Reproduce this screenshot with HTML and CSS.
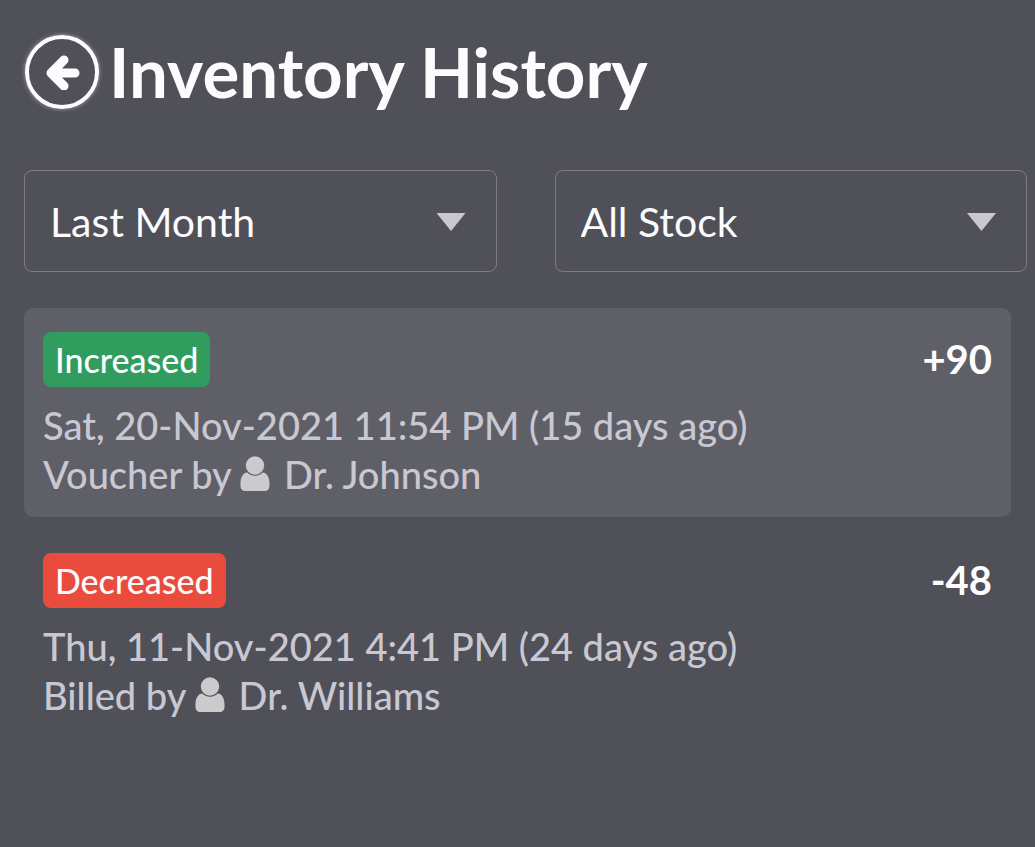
FILE: index.html
```html
<!DOCTYPE html>
<html lang="en">
<head>
  <meta charset="UTF-8">
  <meta name="viewport" content="width=device-width, initial-scale=1">
  <title>Inventory History</title>
  <link rel="stylesheet" href="styles.css">
</head>
<body>
  <svg class="sprite" aria-hidden="true">
    <symbol id="icon-user" viewBox="0 0 30 36">
      <path d="M7 16.500C3 17 .5 21.500 .5 27.500V30c0 3 2 5 5 5h19c3 0 5-2 5-5v-2.500c0-6-2.500-10.500-6.500-11-2 2-5 3.200-8 3.200s-6-1.200-8-3.200z"/>
      <circle cx="15" cy="9.500" r="9.200"/>
    </symbol>
  </svg>

  <header class="page-header">
    <button class="back-button" type="button" aria-label="Back">
      <svg class="back-icon" viewBox="0 0 36 36">
        <path d="M20 6 7 19l13 13M8 19h23"/>
      </svg>
    </button>
    <h1>Inventory History</h1>
  </header>

  <main>
    <form class="filters">
      <div class="dropdown">
        <select id="period" aria-label="Period">
          <option>Last Month</option>
        </select>
      </div>
      <div class="dropdown">
        <select id="stock" aria-label="Stock">
          <option>All Stock</option>
        </select>
      </div>
    </form>

    <ul class="history">
      <li class="entry highlighted">
        <div class="entry-top">
          <span class="label increased">Increased</span>
          <strong class="amount">+90</strong>
        </div>
        <div class="entry-line">Sat, 20-Nov-2021 11:54 PM (15 days ago)</div>
        <div class="entry-line">Voucher by <svg class="user-icon" aria-hidden="true"><use href="#icon-user"/></svg> Dr. Johnson</div>
      </li>
      <li class="entry">
        <div class="entry-top">
          <span class="label decreased">Decreased</span>
          <strong class="amount">-48</strong>
        </div>
        <div class="entry-line">Thu, 11-Nov-2021 4:41 PM (24 days ago)</div>
        <div class="entry-line">Billed by <svg class="user-icon" aria-hidden="true"><use href="#icon-user"/></svg> Dr. Williams</div>
      </li>
    </ul>
  </main>
</body>
</html>
```
FILE: styles.css
```css
* { box-sizing: border-box; }
body {
  margin: 0;
  background: #505058;
  color: #fcfcff;
  font-family: Lato, sans-serif;
  font-size: 38px;
  font-weight: 500;
}
.sprite {
  display: none;
}
.page-header {
  display: flex;
  align-items: center;
  gap: 10px;
  padding: 24px 25px 50px;
}
.page-header h1 {
  margin: 0;
  font-size: 69px;
  line-height: 96px;
  font-weight: bold;
}
.back-button {
  display: flex;
  align-items: center;
  justify-content: center;
  flex: none;
  width: 74px;
  height: 74px;
  padding: 0;
  border: 4px solid #fcfcff;
  border-radius: 50%;
  background: none;
  box-shadow: 0 0 4px rgba(255,255,255,0.5);
  cursor: pointer;
}
.back-icon {
  width: 36px;
  height: 36px;
  fill: none;
  stroke: #fcfcff;
  stroke-width: 9;
  stroke-linecap: round;
  stroke-linejoin: round;
}
.filters {
  display: grid;
  grid-template-columns: 1fr 1fr;
  gap: 58px;
  padding: 0 8px 0 24px;
}
.dropdown {
  position: relative;
}
.dropdown::after {
  content: "";
  position: absolute;
  top: 43px;
  right: 31px;
  width: 29px;
  height: 18px;
  background: #c9c8ce;
  clip-path: polygon(0 0, 100% 0, 50% 100%);
  pointer-events: none;
}
.dropdown select {
  appearance: none;
  display: block;
  width: 100%;
  height: 102px;
  padding: 0 60px 0 25px;
  border: 1px solid #7d7c85;
  border-radius: 8px;
  background: none;
  color: inherit;
  font-family: inherit;
  font-size: 41px;
}
.history {
  margin: 36px 24px;
  padding: 0;
  list-style: none;
}
.entry {
  margin-bottom: 12px;
  padding: 24px 19px 18px;
  border-radius: 9px;
}
.highlighted {
  background: #5f5f68;
}
.entry-top {
  display: flex;
  align-items: center;
  justify-content: space-between;
  margin-bottom: 14px;
}
.label {
  padding: 0 12px;
  border-radius: 8px;
  font-size: 34px;
  line-height: 55px;
}
.increased {
  background: #309c5e;
}
.decreased {
  background: #e94b3d;
}
.amount {
  font-size: 40px;
  line-height: 55px;
}
.entry-line {
  color: #c9c8d2;
  line-height: 49px;
}
.user-icon {
  width: 30px;
  height: 36px;
  margin-right: 4px;
  vertical-align: -3px;
  fill: #cbcbcd;
}
```
